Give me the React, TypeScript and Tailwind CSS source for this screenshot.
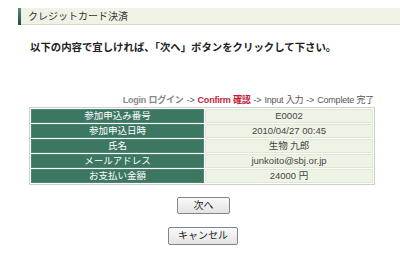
export default function App() {
  const rows: [string, string][] = [
    ["参加申込み番号", "E0002"],
    ["参加申込日時", "2010/04/27 00:45"],
    ["氏名", "生物 九郎"],
    ["メールアドレス", "junkoito@sbj.or.jp"],
    ["お支払い金額", "24000 円"],
  ];

  return (
    <div className="w-[400px] h-[257px] bg-white overflow-hidden font-['Liberation_Sans','Noto_Sans_CJK_JP',sans-serif] text-[#222]">
      {/* 見出し */}
      <div className="mt-[8px] ml-[18px] flex h-[17px]">
        <div className="w-[3px] bg-gradient-to-b from-[#5d8f7b] to-[#1f4a3b]" />
        <div className="flex-1 bg-[#eef3e6] border-b border-[#d3dacb] pl-[7px] flex items-center text-[10px] text-[#333]">
          クレジットカード決済
        </div>
      </div>

      <p className="mt-[16px] ml-[30px] text-[10.4px] font-bold leading-[14px]">
        以下の内容で宜しければ、「次へ」ボタンをクリックして下さい。
      </p>

      {/* ステップ */}
      <div className="mt-[39px] mr-[26px] flex justify-end text-[9px] leading-[12px] text-[#555] tracking-[-0.2px]">
        <span className="text-[#888] font-bold">Login ログイン</span>
        <span className="mx-[3px]">-&gt;</span>
        <span className="text-[#c41e3a] font-bold">Confirm 確認</span>
        <span className="mx-[3px]">-&gt;</span>
        <span>Input 入力</span>
        <span className="mx-[3px]">-&gt;</span>
        <span>Complete 完了</span>
      </div>

      {/* 内容 */}
      <table className="ml-[29px] mt-[1px] w-[346px] border border-[#cfcfcf] border-separate border-spacing-[1px] text-[9.5px] leading-[12px]">
        <tbody>
          {rows.map(([label, value]) => (
            <tr key={label} className="h-[13.4px]">
              <td className="w-[173px] bg-[#3c7762] text-white text-center border border-[#4f8471] p-0">
                {label}
              </td>
              <td className="bg-[#eef4e5] text-[#444] text-center border border-[#dfe6d6] p-0">
                {value}
              </td>
            </tr>
          ))}
        </tbody>
      </table>

      {/* ボタン */}
      <div className="mt-[12px] flex flex-col items-center gap-[13px]">
        <button className="w-[53px] h-[17px] ml-[7px] bg-gradient-to-b from-[#fafafa] to-[#e4e4e4] border border-[#7a8690] rounded-[2px] text-[10px] leading-none text-[#222]">
          次へ
        </button>
        <button className="w-[70px] h-[18px] ml-[6px] bg-gradient-to-b from-[#fafafa] to-[#e4e4e4] border border-[#7a8690] rounded-[2px] text-[10px] leading-none text-[#222]">
          キャンセル
        </button>
      </div>
    </div>
  );
}
